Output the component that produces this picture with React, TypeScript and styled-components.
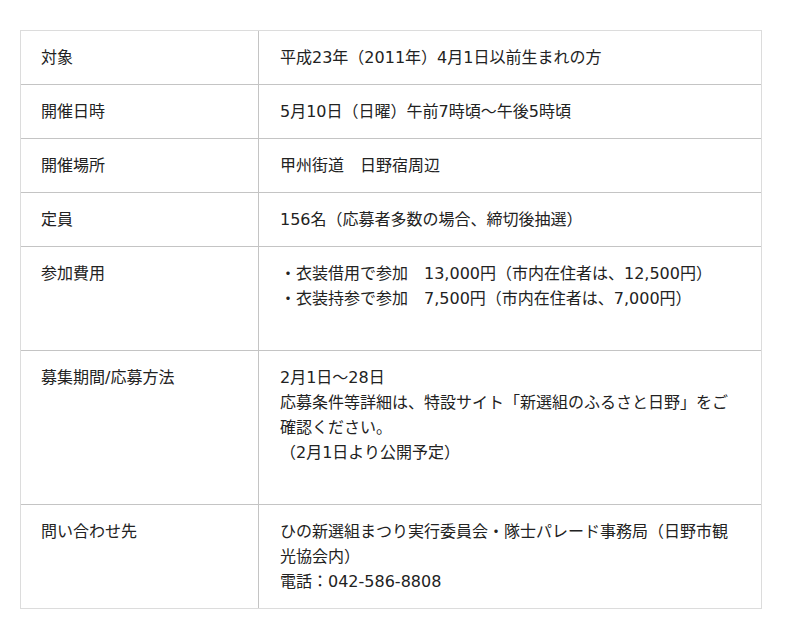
import styled, { createGlobalStyle } from "styled-components";

const GlobalStyle = createGlobalStyle`
  body {
    margin: 0;
    background: #fff;
    font-family: "DejaVu Sans", "Noto Sans CJK JP", sans-serif;
    color: #222;
  }
`;

const Page = styled.div`
  padding: 30px 38px 30px 20px;
`;

const InfoTable = styled.table`
  width: 742px;
  table-layout: fixed;
  border-collapse: separate;
  border-spacing: 0;
  border: 1px solid #dcdcdc;
  font-size: 16px;
  line-height: 25px;
`;

const Row = styled.tr`
  &:not(:last-child) > td {
    border-bottom: 1px solid #c4c4c4;
  }
`;

const Label = styled.td`
  width: 197px;
  padding: 14px 20px;
  vertical-align: top;
  border-right: 1px solid #c4c4c4;
`;

const Value = styled.td`
  padding: 14px 21px;
  vertical-align: top;
`;

const Lines = styled.div<{ $gap?: boolean }>`
  padding-bottom: ${({ $gap }) => ($gap ? "25px" : "0")};
`;

const rows: { label: string; lines: string[]; gap?: boolean }[] = [
  { label: "対象", lines: ["平成23年（2011年）4月1日以前生まれの方"] },
  { label: "開催日時", lines: ["5月10日（日曜）午前7時頃～午後5時頃"] },
  { label: "開催場所", lines: ["甲州街道　日野宿周辺"] },
  { label: "定員", lines: ["156名（応募者多数の場合、締切後抽選）"] },
  {
    label: "参加費用",
    lines: [
      "・衣装借用で参加　13,000円（市内在住者は、12,500円）",
      "・衣装持参で参加　7,500円（市内在住者は、7,000円）",
    ],
    gap: true,
  },
  {
    label: "募集期間/応募方法",
    lines: [
      "2月1日～28日",
      "応募条件等詳細は、特設サイト「新選組のふるさと日野」をご確認ください。",
      "（2月1日より公開予定）",
    ],
    gap: true,
  },
  {
    label: "問い合わせ先",
    lines: [
      "ひの新選組まつり実行委員会・隊士パレード事務局（日野市観光協会内）",
      "電話：042-586-8808",
    ],
  },
];

export default function App() {
  return (
    <>
      <GlobalStyle />
      <Page>
        <InfoTable>
          <tbody>
            {rows.map((r) => (
              <Row key={r.label}>
                <Label>{r.label}</Label>
                <Value>
                  <Lines $gap={r.gap}>
                    {r.lines.map((l) => (
                      <div key={l}>{l}</div>
                    ))}
                  </Lines>
                </Value>
              </Row>
            ))}
          </tbody>
        </InfoTable>
      </Page>
    </>
  );
}
